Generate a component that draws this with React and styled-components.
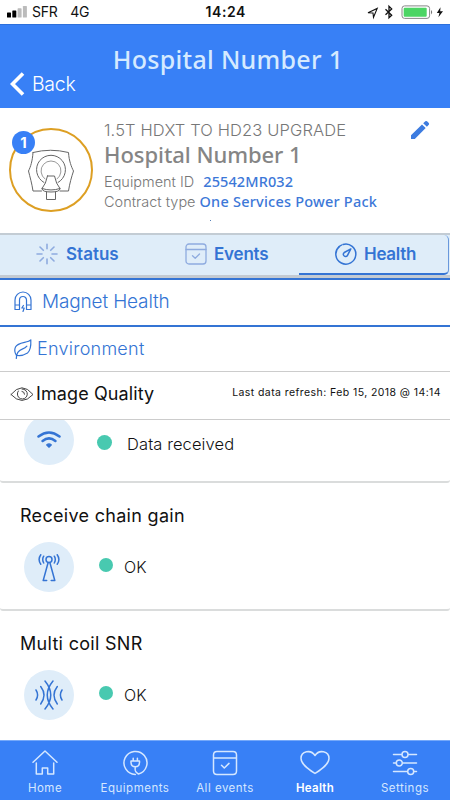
import React from "react";
import styled, {createGlobalStyle} from "styled-components";

const GlobalStyle = createGlobalStyle`
* {
    box-sizing: border-box;
}

body {
    margin: 0;
    background: #fff;
    font-family: Inter, "Liberation Sans", sans-serif;
}

svg {
    display: block;
    flex: none;
}
`

const Screen = styled.div`
width: 450px;
height: 800px;
display: flex;
flex-direction: column;
overflow: hidden;
background: #fff;
`

const Text = styled.span`
display: block;
flex: none;
white-space: nowrap;
line-height: ${p => p.$line || 24}px;
font-size: ${p => p.$size}px;
font-weight: ${p => p.$weight || 400};
letter-spacing: ${p => p.$spacing || 0}px;
color: ${p => p.$color || "#111"};
`

const BrandText = styled(Text)`
font-family: "Noto Sans", "Open Sans", sans-serif;
`

const StatusBar = styled.div`
height: 24px;
flex: none;
display: grid;
grid-template-columns: 1fr 40px 1fr;
align-items: center;
padding: 0 6px 0 7px;
`

const StatusGroup = styled.div`
display: flex;
align-items: center;
justify-content: ${p => p.$end ? "flex-end" : "flex-start"};
`

const Carrier = styled(Text)`
margin-left: ${p => p.$gap}px;
`

const Header = styled.div`
height: 84px;
flex: none;
background: #3880f6;
border-top: 1px solid #2d70dc;
padding-top: 18px;
`

const HeaderTitle = styled(BrandText)`
text-align: center;
padding-left: 6px;
`

const BackLink = styled.div`
display: flex;
align-items: center;
gap: 7px;
padding-left: 10px;
margin-top: -4px;
`

const Device = styled.div`
height: 125px;
flex: none;
display: flex;
padding: 10px 20px 0 9px;
`

const Avatar = styled.div`
position: relative;
width: 84px;
height: 84px;
margin: 10px 11px 0 0;
border: 2px solid #dd9f23;
border-radius: 50%;
display: flex;
justify-content: center;
padding-top: 19px;
`

const Badge = styled.div`
position: absolute;
left: 1px;
top: 1px;
width: 23px;
height: 23px;
border-radius: 50%;
background: #3880f6;
display: flex;
align-items: center;
justify-content: center;
`

const DeviceInfo = styled.div`
flex: 1;
`

const DeviceName = styled(BrandText)`
padding-bottom: 4px;
`

const InfoLine = styled.div`
display: flex;
gap: ${p => p.$gap}px;
height: 20px;
`

const EditButton = styled.div`
padding-top: 2px;
`

const Speck = styled.div`
width: 1px;
height: 1px;
margin: 10px 0 0 106px;
background: #5580b8;
`

const Tabs = styled.div`
height: 45px;
flex: none;
display: grid;
grid-template-columns: 150px 149px 150px;
background: #dfedf9;
border-top: 2px solid #c3ccd4;
border-bottom: 3px solid #c3cad2;
`

const Tab = styled.div`
display: flex;
align-items: center;
gap: ${p => p.$gap}px;
padding-left: ${p => p.$left}px;
padding-bottom: 2px;
${p => p.$active && `
padding-bottom: 0;
border-bottom: 2px solid #3474d4;
border-right: 1px solid #6998dc;
border-radius: 0 5px 5px 0;
`}
`

const Section = styled.div`
height: ${p => p.$height}px;
flex: none;
display: flex;
align-items: center;
gap: ${p => p.$gap}px;
padding: 0 9px ${p => p.$bottom || 0}px ${p => p.$left}px;
border-top: ${p => p.$top || "none"};
border-bottom: ${p => p.$border};
`

const Refresh = styled(Text)`
margin-left: auto;
padding-bottom: 2px;
`

const Card = styled.div`
height: ${p => p.$height}px;
flex: none;
overflow: hidden;
padding: 0 20px;
border-bottom: ${p => p.$last ? "none" : "2px solid #dadcdc"};
border-radius: 0 0 3px 3px;
`

const CardTitle = styled(Text)`
padding-top: 21px;
margin-bottom: 14px;
`

const Reading = styled.div`
display: flex;
align-items: center;
padding-left: 4px;
margin-top: ${p => p.$shift || 0}px;
`

const ReadingText = styled(Text)`
padding-top: ${p => p.$drop || 0}px;
`

const RoundIcon = styled.div`
width: 50px;
height: 50px;
border-radius: 50%;
background: #dfedf9;
display: flex;
align-items: center;
justify-content: center;
`

const Dot = styled.div`
width: ${p => p.$size}px;
height: ${p => p.$size}px;
border-radius: 50%;
background: #48c9b0;
margin: ${p => p.$top || 0}px ${p => p.$right}px 4px ${p => p.$left}px;
`

const BottomNav = styled.div`
height: 60px;
flex: none;
margin-top: auto;
display: grid;
grid-template-columns: repeat(5, 90px);
background: #3880f6;
border-top: 1px solid #75a9fa;
`

const NavItem = styled.div`
display: flex;
flex-direction: column;
align-items: center;
padding-top: 7px;
`

const Line = ({w = 30, h = 30, color = "#3474d4", width = 1.4, box, children}) => (
    <svg width={w} height={h} viewBox={box || `0 0 ${w} ${h}`} fill="none" stroke={color}
        strokeWidth={width} strokeLinecap="round" strokeLinejoin="round">
        {children}
    </svg>
)

const SignalIcon = () => (
    <svg width="20" height="12" viewBox="0 0 20 12">
        <rect x="0" y="6.5" width="4" height="5" rx="0.6" fill="#000" />
        <rect x="5.3" y="4.5" width="4" height="7" rx="0.6" fill="#000" />
        <rect x="10.6" y="2.3" width="4" height="9.2" rx="0.6" fill="#bbb" />
        <rect x="15.9" y="0" width="4" height="11.5" rx="0.6" fill="#bbb" />
    </svg>
)

const PowerIcons = () => (
    <svg width="78" height="16" viewBox="0 0 78 16">
        <path d="M2 8.8 L11.2 4.4 L7.5 13.3 L7 9 Z" fill="none" stroke="#111" strokeWidth="1.1" />
        <path d="M19.5 5.2 L25.7 11.2 L23 13.8 V2.2 L25.7 4.9 L19.5 10.8" fill="none" stroke="#111" strokeWidth="1.3" />
        <rect x="36" y="1.9" width="27.6" height="12.5" rx="2.6" fill="#fff" stroke="#888" />
        <rect x="37.7" y="3.7" width="23" height="9" rx="1" fill="#4cd564" />
        <path d="M65 6 Q67.4 8.2 65 10.5 Z" fill="#777" />
        <path d="M74.5 3.2 L70.8 9 H73.4 L72.4 13.2 L77 7.3 H74.2 Z" fill="#111" />
    </svg>
)

const ScannerIcon = () => (
    <Line w={48} h={52} color="#666" width={1}>
        <path d="M6 3.5 Q23.5 -1 41.5 3.5 C42 12 44.5 18 46.5 22 C44.5 28 42.5 35 41.5 42 H33 M14.5 42 H6 C5 35 3 28 1.5 22 C3.5 18 5.5 12 6 3.5" />
        <path d="M17 33.5 A14.5 14.5 0 1 1 31 33.5" />
        <path d="M18 30 A10 10 0 1 1 30 30" stroke="#999" />
        <path d="M20.5 27 H27.5 Q29 35 33 39.5 Q33 43 24 43 Q15 43 15 39.5 Q19 35 20.5 27 Z M15 39.5 Q24 42.5 33 39.5 M19.5 43 V50.5 H28.5 V43" />
    </Line>
)

const SpinnerIcon = () => (
    <Line w={22} h={22} color="#8eabdf" width={1.6}>
        <path d="M11 1.2 V5.8 M11 16 V20.8 M1 11 H6 M16 11 H21 M4 4 L7.3 7.3 M14.7 7.3 L18 4 M4 18 L7.3 14.7 M14.7 14.7 L18 18" />
    </Line>
)

const CalendarIcon = ({size, color, width}) => (
    <Line w={size} h={size} box="0 0 22 22" color={color} width={width}>
        <rect x="1" y="1" width="20" height="20" rx="3" />
        <path d="M1 6.5 H21 M7.5 12.8 L10.2 15.3 L14.5 11" />
    </Line>
)

const GaugeIcon = () => (
    <Line w={22} h={22} width={1.5}>
        <path d="M4.2 3.6 A10 10 0 1 0 8 1.5" />
        <path d="M4.2 3.6 Q5.4 2.5 6.5 2.1" />
        <path d="M15.8 5.9 L9.3 9.5 Q7.4 11.3 9 12.8 Q10.8 14.4 12.5 12.4 Z" />
    </Line>
)

const MagnetIcon = () => (
    <Line w={18} h={22} width={1.2}>
        <path d="M1 14 V9 A8 8 0 0 1 17 9 V14 M5.5 14 V9 A3.5 3.5 0 0 1 12.5 9 V14 M1 14 H5.5 V18.5 H1 Z M12.5 14 H17 V18.5 H12.5 Z M9.4 14.5 L7.8 17 H10.2 L9 20.5" />
    </Line>
)

const LeafIcon = () => (
    <Line w={20} h={22} width={1.2}>
        <path d="M17.8 1.8 C15 5 5 3.7 2.5 9 Q.7 13 3.3 17.2 Q8.2 18.7 14.5 15 Q18.3 12 17.8 1.8 M3.3 20.5 Q3.4 13 9.2 11.1 Q12.5 10 13.9 8.2" />
    </Line>
)

const EyeIcon = () => (
    <Line w={24} h={18} color="#444" width={1}>
        <path d="M1 9.5 Q12 -4 23 9.5 Q12 21.5 1 9.5 M8.3 6 A5 5 0 1 0 12 4 M12 6.4 A2.7 2.7 0 0 1 14.5 9.2" />
    </Line>
)

const WifiIcon = () => (
    <Line w={26} h={22} width={2.5}>
        <path d="M2.5 7.5 Q13 -.4 23.5 7.5 M6.6 12 Q13 6.7 19.4 12" />
        <path d="M13 18.2 L10.6 15.9 Q13 14 15.4 15.9 Z" fill="#3474d4" strokeWidth="1.2" />
    </Line>
)

const AntennaIcon = () => (
    <Line w={24} h={30} width={1.5}>
        <circle cx="12" cy="7.6" r="3" />
        <path d="M11 11 L6.2 28.5 H9.7 M13 11 L17.8 28.5 H14.2 M6.7 4.2 Q4.7 7.5 6.7 11 M17.3 4.2 Q19.3 7.5 17.3 11 M3.8 2.8 Q.4 7.5 3.8 12.2 M20.2 2.8 Q23.6 7.5 20.2 12.2" />
    </Line>
)

const CoilIcon = () => (
    <Line w={30} h={30} width={1.5}>
        <path d="M2 10 Q5.2 15 2 20 M6.7 6.5 Q13.3 15 6.7 24 M11 1 Q22.5 15 11 29 M19 1 Q7.5 15 19 29 M23.3 6.5 Q16.7 15 23.3 24 M28 10 Q24.8 15 28 20" />
    </Line>
)

const PencilIcon = () => (
    <svg width="20" height="20" viewBox="0 0 20 20" fill="#3d7ce0">
        <path d="M1 15.2 L12 4.4 L15.7 8 L4.8 19 H1 Z M13.2 3.2 L15.3 1.2 Q16.2 .6 17 1.3 L18.8 3.1 Q19.5 4 18.8 4.8 L16.9 6.8 Z" />
    </svg>
)

const navColor = "#d5e7ff";

const navItems = [
    {name: "Home", icon: <path d="M3 14.2 L15 3 L27 14.2 M6.3 15 V26 H12.3 V20 H17.7 V26 H23.7 V15" />},
    {name: "Equipments", icon: <path d="M15.3 26.4 A11.5 11.5 0 1 1 18.5 26 C14 23.5 15.2 21.5 15.3 18.8 M11 13 H19.5 V14.5 Q19.3 18.8 15.3 18.8 Q11.2 18.8 11 14.5 Z M13.2 10.3 V13 M17.4 10.3 V13" />},
    {name: "All events", icon: <path d="M7 3.5 H23 Q26.5 3.5 26.5 7 V23 Q26.5 26.5 23 26.5 H7 Q3.5 26.5 3.5 23 V7 Q3.5 3.5 7 3.5 M3.5 10 H26.5 M11.5 17.2 L14.3 20 L19 15.4" />},
    {name: "Health", active: true, icon: <path d="M15 25.5 C9 21.5 1 16.5 1 10.5 C1 3 11 1.2 15 7.5 C19 1.2 29 3 29 10.5 C29 16.5 21 21.5 15 25.5 Z" />},
    {name: "Settings", icon: <path d="M3.5 6.5 H12 M18 6.5 H26.5 M3.5 15 H6.3 M12.3 15 H26.5 M3.5 23.5 H17.7 M23.7 23.5 H26.5 M18 6.5 A3 3 0 1 1 12 6.5 A3 3 0 1 1 18 6.5 M12.3 15 A3 3 0 1 1 6.3 15 A3 3 0 1 1 12.3 15 M23.7 23.5 A3 3 0 1 1 17.7 23.5 A3 3 0 1 1 23.7 23.5" />},
];

const App = () => (
    <>
        <GlobalStyle />
        <Screen>
            <StatusBar>
                <StatusGroup>
                    <SignalIcon />
                    <Carrier $gap={5} $size={14} $spacing={-0.3}>SFR</Carrier>
                    <Carrier $gap={13} $size={14} $spacing={-0.3}>4G</Carrier>
                </StatusGroup>
                <Text $size={14} $weight={600} $spacing={0.6}>14:24</Text>
                <StatusGroup $end><PowerIcons /></StatusGroup>
            </StatusBar>
            <Header>
                <HeaderTitle $size={25} $weight={500} $line={32} $spacing={0.3} $color="#d5eaff">Hospital Number 1</HeaderTitle>
                <BackLink>
                    <Line w={15} h={26} color="#fff" width={3.6}><path d="M13 2.5 L2.5 13 L13 23.5" strokeLinecap="butt" strokeLinejoin="miter" /></Line>
                    <Text $size={19.5} $weight={300} $spacing={-0.3} $color="#fff">Back</Text>
                </BackLink>
            </Header>
            <Device>
                <Avatar>
                    <ScannerIcon />
                    <Badge><Text $size={15} $weight={700} $color="#fff">1</Text></Badge>
                </Avatar>
                <DeviceInfo>
                    <Text $size={16.5} $weight={300} $spacing={0.13} $color="#777">1.5T HDXT TO HD23 UPGRADE</Text>
                    <DeviceName $size={22} $weight={500} $line={24} $spacing={-0.05} $color="#858585">Hospital Number 1</DeviceName>
                    <InfoLine $gap={9}>
                        <Text $size={14.5} $weight={300} $color="#777">Equipment ID</Text>
                        <BrandText $size={14.5} $weight={500} $line={23} $spacing={0.1} $color="#3d78d8">25542MR032</BrandText>
                    </InfoLine>
                    <InfoLine $gap={4}>
                        <Text $size={14.5} $weight={300} $color="#777">Contract type</Text>
                        <BrandText $size={14.5} $weight={500} $line={23} $spacing={0.22} $color="#3d78d8">One Services Power Pack</BrandText>
                    </InfoLine>
                    <Speck />
                </DeviceInfo>
                <EditButton><PencilIcon /></EditButton>
            </Device>
            <Tabs>
                <Tab $left={36} $gap={8}>
                    <SpinnerIcon />
                    <Text $size={17} $weight={600} $color="#3474d4">Status</Text>
                </Tab>
                <Tab $left={35} $gap={7}>
                    <CalendarIcon size={22} color="#8eabdf" width={1.3} />
                    <Text $size={17} $weight={600} $spacing={-0.2} $color="#3474d4">Events</Text>
                </Tab>
                <Tab $left={36} $gap={7} $active>
                    <GaugeIcon />
                    <Text $size={17} $weight={600} $spacing={-0.3} $color="#3474d4">Health</Text>
                </Tab>
            </Tabs>
            <Section $height={49} $left={14} $gap={10} $bottom={2} $top="2px solid #3474d4" $border="2px solid #3474d4">
                <MagnetIcon />
                <Text $size={19} $weight={300} $spacing={-0.15} $color="#3474d4">Magnet Health</Text>
            </Section>
            <Section $height={45} $left={13} $gap={4} $bottom={1} $border="1px solid #ccc">
                <LeafIcon />
                <Text $size={18} $weight={300} $spacing={0.25} $color="#3474d4">Environment</Text>
            </Section>
            <Section $height={48} $left={10} $gap={2} $bottom={3} $border="1px solid #ccc">
                <EyeIcon />
                <Text $size={18} $spacing={0.1} $color="#111">Image Quality</Text>
                <Refresh $size={10.5} $spacing={0.42}>Last data refresh: Feb 15, 2018 @ 14:14</Refresh>
            </Section>
            <Card $height={63}>
                <Reading $shift={-5}>
                    <RoundIcon><WifiIcon /></RoundIcon>
                    <Dot $size={15} $left={23} $right={15} $top={9} />
                    <ReadingText $size={16.5} $weight={300} $spacing={0.1} $drop={7}>Data received</ReadingText>
                </Reading>
            </Card>
            <Card $height={128}>
                <CardTitle $size={18} $spacing={0.3}>Receive chain gain</CardTitle>
                <Reading>
                    <RoundIcon><AntennaIcon /></RoundIcon>
                    <Dot $size={14} $left={25} $right={11} />
                    <ReadingText $size={16} $weight={300}>OK</ReadingText>
                </Reading>
            </Card>
            <Card $height={128} $last>
                <CardTitle $size={18} $spacing={0.3}>Multi coil SNR</CardTitle>
                <Reading>
                    <RoundIcon><CoilIcon /></RoundIcon>
                    <Dot $size={14} $left={25} $right={11} />
                    <ReadingText $size={16} $weight={300}>OK</ReadingText>
                </Reading>
            </Card>
            <BottomNav>
                {navItems.map(item => (
                    <NavItem key={item.name}>
                        <Line color={navColor} width={1.5}>{item.icon}</Line>
                        <Text $size={11.5} $line={20} $spacing={item.active ? 0.3 : 0.5} $weight={item.active ? 600 : 400} $color={item.active ? "#fff" : navColor}>{item.name}</Text>
                    </NavItem>
                ))}
            </BottomNav>
        </Screen>
    </>
);

export default App;
